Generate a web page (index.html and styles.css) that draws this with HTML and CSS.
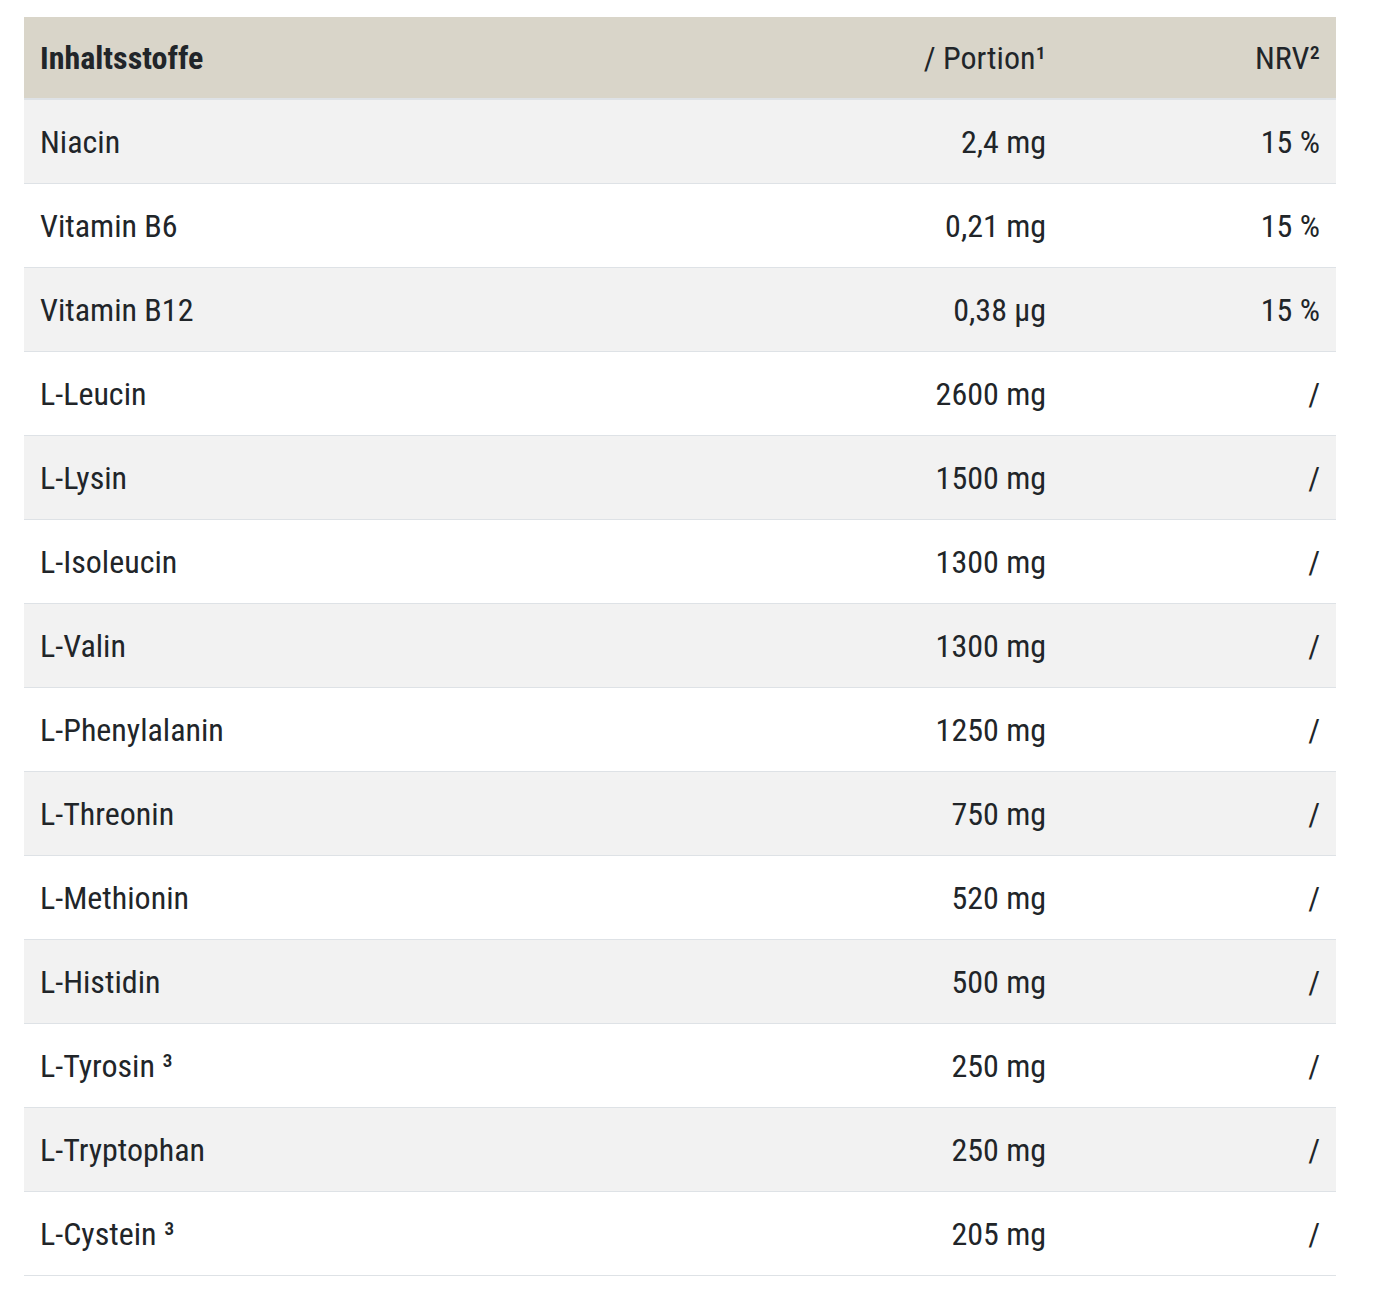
FILE: index.html
```html
<!DOCTYPE html>
<html lang="de">
<head>
<meta charset="utf-8">
<link rel="stylesheet" href="styles.css">
</head>
<body>
<div class="wrap">
<table class="nut">
<thead>
<tr><th class="c1">Inhaltsstoffe</th><th class="c2">/ Portion¹</th><th class="c3">NRV²</th></tr>
</thead>
<tbody>
<tr><td class="c1">Niacin</td><td class="c2">2,4 mg</td><td class="c3">15 %</td></tr>
<tr><td class="c1">Vitamin B6</td><td class="c2">0,21 mg</td><td class="c3">15 %</td></tr>
<tr><td class="c1">Vitamin B12</td><td class="c2">0,38 µg</td><td class="c3">15 %</td></tr>
<tr><td class="c1">L-Leucin</td><td class="c2">2600 mg</td><td class="c3">/</td></tr>
<tr><td class="c1">L-Lysin</td><td class="c2">1500 mg</td><td class="c3">/</td></tr>
<tr><td class="c1">L-Isoleucin</td><td class="c2">1300 mg</td><td class="c3">/</td></tr>
<tr><td class="c1">L-Valin</td><td class="c2">1300 mg</td><td class="c3">/</td></tr>
<tr><td class="c1">L-Phenylalanin</td><td class="c2">1250 mg</td><td class="c3">/</td></tr>
<tr><td class="c1">L-Threonin</td><td class="c2">750 mg</td><td class="c3">/</td></tr>
<tr><td class="c1">L-Methionin</td><td class="c2">520 mg</td><td class="c3">/</td></tr>
<tr><td class="c1">L-Histidin</td><td class="c2">500 mg</td><td class="c3">/</td></tr>
<tr><td class="c1">L-Tyrosin ³</td><td class="c2">250 mg</td><td class="c3">/</td></tr>
<tr><td class="c1">L-Tryptophan</td><td class="c2">250 mg</td><td class="c3">/</td></tr>
<tr><td class="c1">L-Cystein ³</td><td class="c2">205 mg</td><td class="c3">/</td></tr>
</tbody>
</table>
</div>
</body>
</html>
```
FILE: styles.css
```css
html, body {
  margin: 0;
  padding: 0;
  background: #ffffff;
}
.wrap {
  padding: 17px 38px 0 24px;
}
.nut {
  width: 1312px;
  border-collapse: collapse;
  font-family: "Roboto Condensed", "Liberation Sans Narrow", "DejaVu Sans Condensed", Roboto, sans-serif;
  font-stretch: condensed;
  font-size: 32px;
  color: #212529;
}
.nut th, .nut td {
  padding: 0 16px;
  vertical-align: middle;
  text-align: left;
}
.nut th {
  height: 81px;
  background: #d9d5c9;
  font-weight: 700;
  border-bottom: 2px solid #dee2e6;
}
.nut th.c2, .nut th.c3 {
  font-weight: 400;
}
.nut td {
  height: 83px;
  font-weight: 400;
  border-bottom: 1px solid #dee2e6;
}
.nut tbody tr:nth-child(odd) td {
  background: #f2f2f2;
}
.nut .c2, .nut .c3 {
  text-align: right;
}
.nut .c2 {
  width: 240px;
}
.nut .c3 {
  width: 242px;
}
```
